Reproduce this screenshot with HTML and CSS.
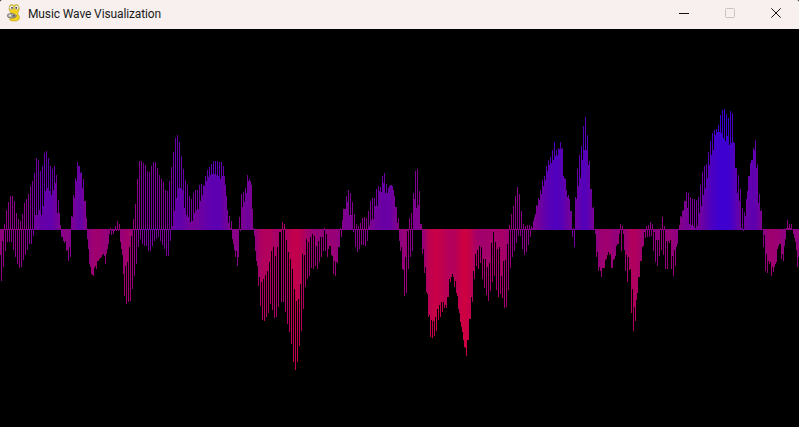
FILE: index.html
```html
<!DOCTYPE html>
<html lang="en">
<head>
  <meta charset="UTF-8">
  <meta name="viewport" content="width=device-width, initial-scale=1.0">
  <title>Music Wave Visualization</title>
  <link rel="stylesheet" href="styles.css">
</head>
<body>

  <div id="titlebar">
    <svg class="app-icon" width="16" height="18" viewBox="0 0 16 18" aria-hidden="true">
      <path d="M4 1 Q6.5 -0.2 8 1.6 Q9.5 -0.2 12 1 Q14.5 4 12.5 7.5 Q11.5 9 12 10.5 Q14.5 12.5 13 15.5 Q11 17.5 7 17 Q3.5 17 3.5 15 Q5 14 8 14 Q9 12 6 10 Q3.5 8 3 5 Q3 3 4 1 Z" fill="#f3d21f" stroke="#b89a2a" stroke-width="0.6"/>
      <circle cx="5.6" cy="3.6" r="2" fill="#fff" stroke="#8a8a80" stroke-width="0.4"/>
      <circle cx="10.6" cy="3.6" r="2" fill="#fff" stroke="#8a8a80" stroke-width="0.4"/>
      <circle cx="6" cy="3.8" r="0.9" fill="#222"/>
      <circle cx="10.2" cy="3.8" r="0.9" fill="#222"/>
      <path d="M1.5 10.5 Q4 8.6 7.5 9.6 L10.5 11.5 Q10.5 13.6 8 13.8 Q4.5 14.6 2 13.4 Q0.8 12 1.5 10.5 Z" fill="#a2a298" stroke="#5c5c55" stroke-width="0.5"/>
      <circle cx="4" cy="11.6" r="1.1" fill="#eeeee6"/>
      <circle cx="7.8" cy="11.8" r="0.9" fill="#44443f"/>
    </svg>
    <span class="app-title">Music Wave Visualization</span>
    <div class="controls">
      <div class="control">
        <svg width="10" height="10" viewBox="0 0 10 10"><path d="M0 5.5H10" stroke="#111" stroke-width="1"/></svg>
      </div>
      <div class="control">
        <svg width="10" height="10" viewBox="0 0 10 10"><rect x="0.5" y="0.5" width="9" height="9" rx="1" fill="none" stroke="#c8c4c2" stroke-width="1"/></svg>
      </div>
      <div class="control">
        <svg width="10" height="10" viewBox="0 0 10 10"><path d="M0.3 0.3L9.7 9.7M9.7 0.3L0.3 9.7" stroke="#111" stroke-width="1"/></svg>
      </div>
    </div>
  </div>

  <canvas id="wave" width="799" height="398"></canvas>

  <script src="wave.js"></script>
</body>
</html>
```

FILE: styles.css
```css
html, body {
  margin: 0;
  padding: 0;
  background: #000;
  overflow: hidden;
}

#titlebar {
  display: flex;
  align-items: center;
  height: 29px;
  background: #f7f0ee;
  border-radius: 2px 2px 0 0;
  font-family: 'Roboto', 'Liberation Sans', sans-serif;
  font-size: 12px;
  letter-spacing: -0.12px;
  color: #1a1a1a;
}

.app-icon {
  margin-left: 6px;
  margin-right: 6px;
  margin-top: -3px;
}

.app-title {
  margin-top: -1px;
  white-space: nowrap;
}

.controls {
  display: flex;
  margin-left: auto;
}

.control {
  display: flex;
  align-items: center;
  justify-content: center;
  width: 46px;
  height: 29px;
  padding-bottom: 3px;
  box-sizing: border-box;
}

#wave {
  display: block;
}
```

FILE: wave.js
```js
// Sample values read per pixel column, positive goes up from the middle line
const segments = [
  [0, [-25,-51,-11,-37,5,-21,19,-12,27,-12,33,-12,33,-20,28,-27,16,-34,10,-38,8,-37,15,-30,26,-25,30,-20,35,-14,43,-14,48,-6,56,14,71,14,69,19,58,14,63,23,76,38,78,41,71,38,63,34,60,39,63,46,54,16,29,16,4,
       -7,-7,-11,-13,-11,-21,-20,-31,-17,-27]],
  [71, [13,12,34,31,51,48,67,63,63,56,57,41,50,28,28,11]],
  [87, [-9,-19,-34,-37,-44,-45,-46,-38,-36,-39,-31,-31,-29,-28,-27,-25,-24,-26,-34,-24,-19,-14,-4,1,-5,-1,-4,-1,3,-1,8,-1,5,-12,-19,-25,-44,-66,-36,-74,-32,-72,-17,-71,-6,-59]],
  [133, [10,-46,25,-34,50,-17,68,-9,68,-14,66,-16,64,-16,58,-21,57,-21,63,-16,67,-11,67,-9,61,-7,54,-11,50,-15,47,-19,39,-26,38,-26,48,-11,62,3,77,18,91,31,94,41,87,41,73,39,60,21,49,14,44,12,33,7,30,8,36,16,39,19,39,20,44]],
  [200, [28,45,34,44,43,53,48,59,52,62,54,65,55,68,55,68,54,68,53,67,50,67,53,63,53,44,33,19,6,13,1,8,-9,-14,-20,-27,-21,-36,-27,12,-1,35,22,37,27,41,36,54,48,50,48,44,20,1]],
  [254, [-6,-21,-31,-36,-56,-47,-76,-52,-90,-49,-91,-45,-87,-41,-83,-32,-74,-21,-80,-17,-88,-26,-87,-17,-77,-2,-2,-72,7,-72,5,-82,-10,-94,-22,-102,-29,-114,-39,-132,-59,-140,-71,-132,-69,-116,-54,-101,-24,-79,-25,-57,-9,-49,-12,-46,-7,-38,-4,-39,-6,-36,-16,-39,-11,-32,-7,-27,-7,-21,1,-21,-4,-27,-19,-16,-16,-25,-26,-44,-31,-46,-32,-33,-17,-17,1,-7]],
  [342, [9,20,20,20,33,27,39,14,36,14,27,-2,15,-17,5,-22,3,-19,6,-15,11,-15,12,-16,11,-11,18,3,28,9,31,10,31,23,40,23,43,38,42,37,53,46,56,36,45,36,41,43,44,44,43,39,33,22,22,6,11,-11]],
  [400, [-21,-17,-39,-40,-66,-27,-63,-1,-39,11,-27,16,-21,36,30,58,21,60,24,38,5,5,-24,-19,-43,-37,-62,-64,-87,-85,-107,-90,-108,-91,-106,-87,-101,-79,-90,-75,-87,-72,-82,-72,-78,-75,-78,-67,-67,-49,-52,-47,-44,-47,-57,-51,-63,-66,-79,-83,-92,-97,-102,-110,-117,-118,-126,-110,-110,-89,-89,-67,-72,-41,-49,-24,-36,-20,-39,-16,-33,-17,-49,-29,-58,-29,-65,-37,-71,-33,-61,-13,-52,-2,-46,-12,-60,-19,-67,-17]],
  [500, [-64,-46,-68,-31,-78,-30,-77,-14,-60,4,-38,15,-27,23,-21,33,-13,42,-6,35,-6,18,-19,5,-25,3,-22,4,-15,4,-7,3,1,8,12,15,24,23,31,29,39,35,49,43,53,49,63,58,69,64,72,66,79,69,87,73,79,74,81,80,87,80,81,53,51,50,39,32,34,30,18,18,-7,1,-17,32,30,60,43,74,51,83,69,103,79,112,79,94,64,68,40,40,21,22,0,-4,-27,-22,-41,-37]],
  [600, [-41,-47,-38,-38,-38,-30,-29,-25,-22,-25,-24,-38,-38,-30,-29,-26,-16,-14,-14,-4,5,-21,3,-4,-20,-41,-25,-52,-27,-40,-39,-83,-59,-101,-77,-91,-70,-63,-47,-47,-31,-31,-17,-16,-2,-8,3,-7,4,-7,7,-6,5,-21,-2,-32,-10,-36,-10,-26,1,-20,12,-25,3,-39,-11,-39,-11,-13,-10,-39,-26,-46,-20,-36,-17,-14,0,4,13,12,18,19,28,28,37,21,36,5,32,4,30,3,30,1,29,3,32,16]],
  [700, [44,23,57,34,63,41,65,51,77,64,88,74,96,79,99,94,100,97,104,97,114,96,119,91,120,88,115,93,111,84,118,86,116,87,86,61,61,36,54,28,40,1,21,-1,17,13,30,38,53,53,66,69,69,81,79,89,61,65,26,35,18,19,0,-17,-5,-41,-24,-43,-31,-34,-32,-46,-37,-42,-37,-34,-32,-19,-16,-14,-14,-29,-24,-31,-16,-9,1,9,1,5,1,5,0,-4,-8,-12,-20,-37,-27]]
];

const canvas = document.getElementById('wave');
const ctx = canvas.getContext('2d');
const midY = 200;

const values = new Array(canvas.width).fill(0);
segments.forEach(function(segment) {
  segment[1].forEach(function(value, i) {
    values[segment[0] + i] = value;
  });
});

// Colour follows the local level: blue above the line, crimson below it
function columnColor(x) {
  let sum = 0;
  let count = 0;
  for (let i = x - 7; i <= x + 7; i++) {
    if (i >= 0 && i < values.length) {
      sum += values[i];
      count++;
    }
  }
  const level = sum / count;
  const red = Math.max(30, Math.min(210, 135 - level * 0.72));
  const blue = Math.max(50, Math.min(225, 135 + level * 0.72));
  return `rgb(${Math.round(red)},0,${Math.round(blue)})`;
}

ctx.fillStyle = '#000';
ctx.fillRect(0, 0, canvas.width, canvas.height);

values.forEach(function(value, x) {
  ctx.fillStyle = columnColor(x);
  if (value >= 0) {
    ctx.fillRect(x, midY - value, 1, value + 1);
  } else {
    ctx.fillRect(x, midY, 1, 1 - value);
  }
});
```
